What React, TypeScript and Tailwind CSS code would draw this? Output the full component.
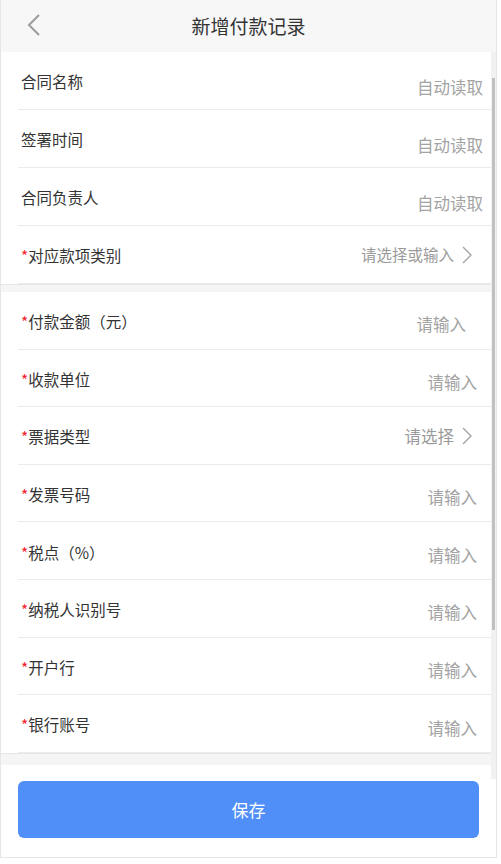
import React from 'react'

type Row = {
  label: string
  required?: boolean
  value: string
  arrow?: boolean
  small?: boolean
  valueClass?: string
}

const CONTRACT_ROWS: Row[] = [
  { label: '合同名称', value: '自动读取', valueClass: 'mr-[8px] mt-[14px]' },
  { label: '签署时间', value: '自动读取', valueClass: 'mr-[8px] mt-[14px]' },
  { label: '合同负责人', value: '自动读取', valueClass: 'mr-[8px] mt-[14px]' },
  { label: '对应款项类别', required: true, value: '请选择或输入', arrow: true, small: true },
]

const PAYMENT_ROWS: Row[] = [
  { label: '付款金额（元）', required: true, value: '请输入', valueClass: 'mr-[25px] mt-[9px]' },
  { label: '收款单位', required: true, value: '请输入', valueClass: 'mr-[14px] mt-[9px]' },
  { label: '票据类型', required: true, value: '请选择', arrow: true },
  { label: '发票号码', required: true, value: '请输入', valueClass: 'mr-[14px] mt-[9px]' },
  { label: '税点（%）', required: true, value: '请输入', valueClass: 'mr-[14px] mt-[9px]' },
  { label: '纳税人识别号', required: true, value: '请输入', valueClass: 'mr-[14px] mt-[9px]' },
  { label: '开户行', required: true, value: '请输入', valueClass: 'mr-[14px] mt-[9px]' },
  { label: '银行账号', required: true, value: '请输入', valueClass: 'mr-[14px] mt-[9px]' },
]

function Chevron() {
  return (
    <svg width="10" height="18" viewBox="0 0 10 18" fill="none">
      <polyline points="1,1 9,9 1,17" stroke="#a8a8a8" strokeWidth="1.5" />
    </svg>
  )
}

function FormRow({ row, height }: { row: Row; height: string }) {
  return (
    <div className={`ml-[17px] flex items-center justify-between border-b border-[#ebebeb] ${height}`}>
      <span className="mt-[3px] pl-[3px] text-[15.5px] text-[#333]">
        {row.required && <span className="text-[#f5222d]">*</span>}
        {row.label}
      </span>
      {row.arrow ? (
        <span className="mr-[19px] mt-[1px] flex items-center gap-[8px]">
          <span className={row.small ? 'text-[15.5px] text-[#9a9a9a]' : 'text-[16.5px] text-[#9a9a9a]'}>{row.value}</span>
          <Chevron />
        </span>
      ) : (
        <span className={`text-[16.5px] text-[#a3a3a3] ${row.valueClass ?? ''}`}>{row.value}</span>
      )}
    </div>
  )
}

export default function App() {
  return (
    <div
      className="flex h-[858px] w-[497px] flex-col border-x border-b border-[#e6e6e6] bg-white"
      style={{ fontFamily: '"Noto Sans CJK SC", "Noto Sans", sans-serif' }}
    >
      <header className="relative flex h-[52px] shrink-0 items-center justify-center bg-[#f7f7f7]">
        <svg width="14" height="22" viewBox="0 0 14 22" fill="none" className="absolute left-[26px] top-[14px]">
          <polyline points="12,1 2,11 12,21" stroke="#9c9c9c" strokeWidth="2" />
        </svg>
        <h1 className="text-[19px] font-normal text-[#333]">新增付款记录</h1>
      </header>

      <div className="flex h-[727px] shrink-0">
        <div className="flex flex-1 flex-col">
          <div className="bg-white">
            {CONTRACT_ROWS.map((row) => (
              <FormRow key={row.label} row={row} height="h-[58px]" />
            ))}
          </div>
          <div className="h-[8px] border-t border-[#e6e6e6] bg-[#f5f5f5]" />
          <div className="bg-white">
            {PAYMENT_ROWS.map((row) => (
              <FormRow key={row.label} row={row} height="h-[57.6px]" />
            ))}
          </div>
          <div className="h-[12px] border-t border-[#e6e6e6] bg-[#f5f5f5]" />
          <div className="flex-1 bg-white" />
        </div>
        <div className="w-[5px] bg-[#f1f1f1] pt-[26px]">
          <div className="mx-auto h-[552px] w-[3px] bg-[#c1c1c1]" />
        </div>
      </div>

      <div className="px-[17px] pt-[2px]">
        <button className="h-[57px] w-full rounded-[6px] bg-[#508ff8] text-[17px] text-white">保存</button>
      </div>
    </div>
  )
}
